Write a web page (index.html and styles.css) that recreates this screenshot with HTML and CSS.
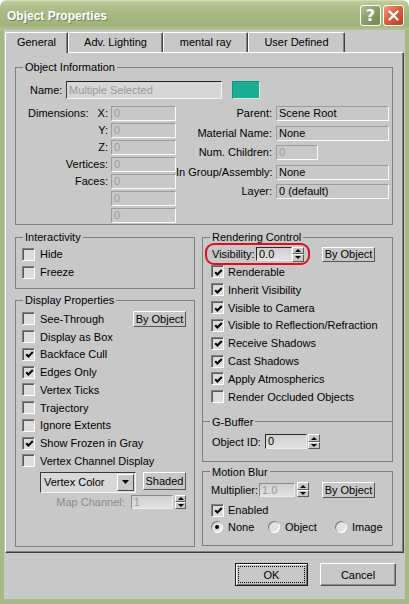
FILE: index.html
```html
<!DOCTYPE html>
<html>
<head>
<meta charset="utf-8">
<title>Object Properties</title>
<link rel="stylesheet" href="styles.css">
</head>
<body>
<div class="window">
  <div class="titlebar">
    <span class="title">Object Properties</span>
    <div class="tb-btns">
      <span class="tb-btn help">?</span>
      <span class="tb-btn close"><svg width="13" height="13" viewBox="0 0 13 13"><path d="M2.5 2.5 L10.5 10.5 M10.5 2.5 L2.5 10.5" stroke="#fff" stroke-width="2.4" stroke-linecap="round"/></svg></span>
    </div>
  </div>
  <div class="client">
    <div class="tabs">
      <div class="tab t1 active">General</div>
      <div class="tab t2">Adv. Lighting</div>
      <div class="tab t3">mental ray</div>
      <div class="tab t4">User Defined</div>
    </div>
    <div class="panel">
      <fieldset class="grp objinfo">
        <legend>Object Information</legend>
        <div class="name-row">
          <span class="name-lbl">Name:</span>
          <span class="fld edit name-fld dis">Multiple Selected</span>
          <span class="swatch"></span>
        </div>
        <div class="details">
          <div class="dims">
            <span class="lbl dim-first"><span>Dimensions:</span><span>X:</span></span><span class="fld dis">0</span>
            <span class="lbl">Y:</span><span class="fld dis">0</span>
            <span class="lbl">Z:</span><span class="fld dis">0</span>
            <span class="lbl">Vertices:</span><span class="fld dis">0</span>
            <span class="lbl">Faces:</span><span class="fld dis">0</span>
            <span class="lbl"></span><span class="fld dis">0</span>
            <span class="lbl"></span><span class="fld dis">0</span>
          </div>
          <div class="info">
            <span class="lbl">Parent:</span><span class="fld">Scene Root</span>
            <span class="lbl">Material Name:</span><span class="fld">None</span>
            <span class="lbl">Num. Children:</span><span class="fld dis short">0</span>
            <span class="lbl">In Group/Assembly:</span><span class="fld">None</span>
            <span class="lbl">Layer:</span><span class="fld">0 (default)</span>
          </div>
        </div>
      </fieldset>

      <div class="cols">
        <div class="col left">
          <fieldset class="grp interact">
            <legend>Interactivity</legend>
            <div class="chk-row"><span class="cb"></span><span>Hide</span></div>
            <div class="chk-row"><span class="cb"></span><span>Freeze</span></div>
          </fieldset>
          <fieldset class="grp display">
            <legend>Display Properties</legend>
            <div class="chk-row"><span class="cb"></span><span>See-Through</span><span class="btn small byobj">By Object</span></div>
            <div class="chk-row"><span class="cb"></span><span>Display as Box</span></div>
            <div class="chk-row"><span class="cb"><svg class="tick" width="9" height="9" viewBox="0 0 9 9"><path d="M1.2 4.2 L3.4 6.4 L7.8 2" stroke="#000" stroke-width="2.1" fill="none"/></svg></span><span>Backface Cull</span></div>
            <div class="chk-row"><span class="cb"><svg class="tick" width="9" height="9" viewBox="0 0 9 9"><path d="M1.2 4.2 L3.4 6.4 L7.8 2" stroke="#000" stroke-width="2.1" fill="none"/></svg></span><span>Edges Only</span></div>
            <div class="chk-row"><span class="cb"></span><span>Vertex Ticks</span></div>
            <div class="chk-row"><span class="cb"></span><span>Trajectory</span></div>
            <div class="chk-row"><span class="cb"></span><span>Ignore Extents</span></div>
            <div class="chk-row"><span class="cb"><svg class="tick" width="9" height="9" viewBox="0 0 9 9"><path d="M1.2 4.2 L3.4 6.4 L7.8 2" stroke="#000" stroke-width="2.1" fill="none"/></svg></span><span>Show Frozen in Gray</span></div>
            <div class="chk-row"><span class="cb"></span><span>Vertex Channel Display</span></div>
            <div class="dd-row">
              <span class="dd"><span class="dd-text">Vertex Color</span><span class="dd-arrow"><svg width="7" height="4" viewBox="0 0 7 4"><path d="M0 0 H7 L3.5 4 Z" fill="#000"/></svg></span></span>
              <span class="btn small shaded">Shaded</span>
            </div>
            <div class="map-row">
              <span class="map-lbl">Map Channel:</span>
              <span class="fld spinfld dis map-fld">1</span>
              <span class="spin"><span class="up"></span><span class="dn"></span></span>
            </div>
          </fieldset>
        </div>

        <div class="col right">
          <fieldset class="grp render">
            <legend>Rendering Control</legend>
            <div class="vis-row">
              <span class="oval">
                <span class="vis-lbl">Visibility:</span>
                <span class="fld spinfld vis-fld">0.0</span>
                <span class="spin"><span class="up"></span><span class="dn"></span></span>
              </span>
              <span class="btn small byobj2">By Object</span>
            </div>
            <div class="rc-list">
              <div class="chk-row"><span class="cb"><svg class="tick" width="9" height="9" viewBox="0 0 9 9"><path d="M1.2 4.2 L3.4 6.4 L7.8 2" stroke="#000" stroke-width="2.1" fill="none"/></svg></span><span>Renderable</span></div>
              <div class="chk-row"><span class="cb"><svg class="tick" width="9" height="9" viewBox="0 0 9 9"><path d="M1.2 4.2 L3.4 6.4 L7.8 2" stroke="#000" stroke-width="2.1" fill="none"/></svg></span><span>Inherit Visibility</span></div>
              <div class="chk-row"><span class="cb"><svg class="tick" width="9" height="9" viewBox="0 0 9 9"><path d="M1.2 4.2 L3.4 6.4 L7.8 2" stroke="#000" stroke-width="2.1" fill="none"/></svg></span><span>Visible to Camera</span></div>
              <div class="chk-row"><span class="cb"><svg class="tick" width="9" height="9" viewBox="0 0 9 9"><path d="M1.2 4.2 L3.4 6.4 L7.8 2" stroke="#000" stroke-width="2.1" fill="none"/></svg></span><span>Visible to Reflection/Refraction</span></div>
              <div class="chk-row"><span class="cb"><svg class="tick" width="9" height="9" viewBox="0 0 9 9"><path d="M1.2 4.2 L3.4 6.4 L7.8 2" stroke="#000" stroke-width="2.1" fill="none"/></svg></span><span>Receive Shadows</span></div>
              <div class="chk-row"><span class="cb"><svg class="tick" width="9" height="9" viewBox="0 0 9 9"><path d="M1.2 4.2 L3.4 6.4 L7.8 2" stroke="#000" stroke-width="2.1" fill="none"/></svg></span><span>Cast Shadows</span></div>
              <div class="chk-row"><span class="cb"><svg class="tick" width="9" height="9" viewBox="0 0 9 9"><path d="M1.2 4.2 L3.4 6.4 L7.8 2" stroke="#000" stroke-width="2.1" fill="none"/></svg></span><span>Apply Atmospherics</span></div>
              <div class="chk-row"><span class="cb"></span><span>Render Occluded Objects</span></div>
            </div>
            <fieldset class="grp gbuf">
              <legend>G-Buffer</legend>
              <div class="oid-row">
                <span class="oid-lbl">Object ID:</span>
                <span class="fld spinfld oid-fld">0</span>
                <span class="spin"><span class="up"></span><span class="dn"></span></span>
              </div>
            </fieldset>
          </fieldset>
          <fieldset class="grp mblur">
            <legend>Motion Blur</legend>
            <div class="mult-row">
              <span class="mult-lbl">Multiplier:</span>
              <span class="fld spinfld dis mult-fld">1.0</span>
              <span class="spin"><span class="up"></span><span class="dn"></span></span>
              <span class="btn small byobj3">By Object</span>
            </div>
            <div class="chk-row en-row"><span class="cb"><svg class="tick" width="9" height="9" viewBox="0 0 9 9"><path d="M1.2 4.2 L3.4 6.4 L7.8 2" stroke="#000" stroke-width="2.1" fill="none"/></svg></span><span>Enabled</span></div>
            <div class="radio-row">
              <span class="ri r-none"><span class="rb on"></span>None</span>
              <span class="ri r-obj"><span class="rb"></span>Object</span>
              <span class="ri r-img"><span class="rb"></span>Image</span>
            </div>
          </fieldset>
        </div>
      </div>
    </div>
    <div class="footer">
      <span class="btn ok"><span class="focus">OK</span></span>
      <span class="btn cancel">Cancel</span>
    </div>
  </div>
</div>
</body>
</html>
```

FILE: styles.css
```css
* { box-sizing: border-box; }
html, body { margin: 0; padding: 0; }
body {
  width: 409px;
  height: 604px;
  overflow: hidden;
  background: #ffffff;
  font-family: "Liberation Sans", Arial, sans-serif;
  font-size: 11px;
  color: #000;
}

.window {
  width: 409px;
  height: 604px;
  display: flex;
  flex-direction: column;
}

/* ---------- title bar ---------- */
.titlebar {
  height: 30px;
  flex: none;
  display: flex;
  align-items: flex-start;
  justify-content: space-between;
  padding: 0 5px 0 7px;
  border-radius: 7px 7px 0 0;
  background: linear-gradient(to bottom, #d6dfbd 0, #b9c898 2px, #abbc87 10px, #a5b781 55%, #a2b47d 85%, #b5c494 100%);
}
.title {
  margin-top: 9px;
  color: #fff;
  font-weight: bold;
  font-size: 12px;
  line-height: 14px;
  text-shadow: 1px 1px 0 #76875a;
}
.tb-btns {
  display: flex;
  gap: 2px;
  margin-top: 5px;
}
.tb-btn {
  width: 21px;
  height: 21px;
  border: 1px solid #fff;
  border-radius: 3px;
  display: flex;
  align-items: center;
  justify-content: center;
}
.help {
  background: linear-gradient(135deg, #b1c291 0, #8aa06a 45%, #6f8652 100%);
  color: #fff;
  font-weight: bold;
  font-size: 16px;
  font-family: "DejaVu Sans", "Liberation Sans", sans-serif;
}
.close {
  background: linear-gradient(135deg, #f0a287 0, #d9603f 45%, #bb3d1d 100%);
}

/* ---------- client ---------- */
.client {
  flex: 1;
  display: flex;
  flex-direction: column;
  background: #c8c8c8;
  border-style: solid;
  border-color: #a5b886;
  border-width: 0 4px 5px 4px;
}

.tabs {
  display: flex;
  height: 20px;
  margin: 2px 0 0 1px;
  position: relative;
  z-index: 1;
}
.tab {
  height: 20px;
  border-top: 1px solid #fff;
  border-left: 1px solid #fff;
  border-right: 1px solid #404040;
  box-shadow: inset -1px 0 0 #808080;
  border-radius: 2px 2px 0 0;
  text-align: center;
  line-height: 19px;
  background: #c8c8c8;
}
.tab.active { height: 21px; }
.t1 { width: 63px; }
.t2 { width: 95px; }
.t3 { width: 85px; }
.t4 { width: 97px; }

.panel {
  margin-left: 1px;
  width: 399px;
  height: 501px;
  flex: none;
  border: 1px solid;
  border-color: #fff #404040 #404040 #fff;
  box-shadow: inset -1px -1px 0 #808080;
}

/* ---------- group boxes ---------- */
.grp {
  margin: 0;
  padding: 0;
  min-width: 0;
  border: 1px solid #7e7e7e;
}
.grp > legend {
  padding: 0 2px;
  line-height: 14px;
  font-size: 11px;
}

.objinfo {
  margin: 7px 10px 0 9px;
  padding: 0 0 1px 12px;
}
.objinfo > legend { margin-left: -5px; }

.name-row {
  display: flex;
  align-items: center;
  height: 18px;
  margin: 7px 0 0 2px;
}
.name-lbl { width: 36px; }
.fld.name-fld { width: 156px; height: 18px; line-height: 16px; }
.swatch {
  width: 28px;
  height: 18px;
  margin-left: 10px;
  background: #1dad95;
  border: 1px solid;
  border-color: #178f7b #e4e4e4 #e4e4e4 #178f7b;
}

.details {
  display: flex;
  margin-top: 7px;
}
.dims {
  display: grid;
  grid-template-columns: 80px 65px;
  column-gap: 3px;
  grid-auto-rows: 15px;
  row-gap: 2px;
  width: 148px;
}
.info {
  display: grid;
  grid-template-columns: 96px 113px;
  column-gap: 4px;
  grid-auto-rows: 15px;
  row-gap: 4.5px;
  align-content: start;
}
.lbl {
  text-align: right;
  line-height: 15px;
  white-space: nowrap;
}
.dim-first {
  display: flex;
  justify-content: space-between;
}

/* ---------- fields ---------- */
.fld {
  display: block;
  height: 15px;
  border: 1px solid;
  border-color: #9c9c9c #fbfbfb #fbfbfb #9c9c9c;
  padding-left: 2px;
  line-height: 13px;
  white-space: nowrap;
  overflow: hidden;
  background: #c8c8c8;
}
.fld.dis { color: #9a9a9a; }
.fld.edit {
  border-color: #1e1e1e #f2f2f2 #f2f2f2 #3a3a3a;
  background: #d6d6d6;
}
.fld.short { width: 42px; }

.fld.spinfld {
  height: 14px;
  line-height: 12px;
  border-color: #2a2a2a #ececec #ececec #2a2a2a;
  background: linear-gradient(to bottom, #cfcfcf, #e2e2e2);
}
.fld.spinfld.dis { border-color: #8a8a8a #ececec #ececec #8a8a8a; }

.spin {
  display: flex;
  flex-direction: column;
  width: 12px;
  height: 15px;
  flex: none;
}
.spin > span {
  flex: 1;
  display: flex;
  align-items: center;
  justify-content: center;
  border: 1px solid;
  border-color: #fff #5a5a5a #5a5a5a #fff;
  background: #c8c8c8;
}
.spin > .up::after {
  content: "";
  border-left: 3px solid transparent;
  border-right: 3px solid transparent;
  border-bottom: 3px solid #000;
}
.spin > .dn::after {
  content: "";
  border-left: 3px solid transparent;
  border-right: 3px solid transparent;
  border-top: 3px solid #000;
}

/* ---------- buttons ---------- */
.btn {
  display: flex;
  align-items: center;
  justify-content: center;
  flex: none;
  border: 1px solid;
  border-color: #fff #555 #555 #fff;
  background: #c8c8c8;
  white-space: nowrap;
}
.btn.small { width: 53px; height: 16px; font-size: 11px; }

/* ---------- checkboxes / radios ---------- */
.chk-row {
  display: flex;
  align-items: center;
  height: 18px;
  gap: 5px;
  white-space: nowrap;
}
.cb {
  width: 13px;
  height: 13px;
  flex: none;
  border: 1px solid;
  border-color: #808080 #fff #fff #808080;
  box-shadow: inset 1px 1px 0 #5a5a5a;
  background: #dcdcdc;
  display: flex;
  align-items: center;
  justify-content: center;
  padding: 1px 0 0 1px;
}
.tick { display: block; }

.rb {
  width: 12px;
  height: 12px;
  flex: none;
  border-radius: 50%;
  background: #e2e2e2;
  box-shadow: inset 1px 1px 0 #7a7a7a, inset -1px -1px 0 #ffffff;
  display: flex;
  align-items: center;
  justify-content: center;
}
.rb.on::after {
  content: "";
  width: 4px;
  height: 4px;
  border-radius: 50%;
  background: #000;
}

/* ---------- columns ---------- */
.cols {
  display: flex;
  gap: 7px;
  margin: 5px 10px 0 9px;
  align-items: flex-start;
}
.col { display: flex; flex-direction: column; }
.col.left { width: 180px; }
.col.right { width: 191px; }

.interact { padding: 1px 0 7px 6px; }
.interact > legend { margin-left: 1px; }

.display {
  margin-top: 4px;
  padding: 3px 8px 37px 6px;
}
.display > legend { margin-left: 1px; }
.display .chk-row { height: 17.75px; }
.byobj { margin-left: auto; }

.dd-row {
  display: flex;
  align-items: flex-start;
  margin: 2px 0 0 18px;
}
.dd {
  display: flex;
  width: 98px;
  height: 21px;
  border: 1px solid;
  border-color: #3a3a3a #f4f4f4 #f4f4f4 #3a3a3a;
  background: #d8d8d8;
}
.dd-text { padding-left: 3px; line-height: 19px; }
.dd-arrow {
  margin: 1px 1px 1px auto;
  width: 17px;
  border: 1px solid;
  border-color: #fff #4a4a4a #4a4a4a #fff;
  background: #c8c8c8;
  display: flex;
  align-items: center;
  justify-content: center;
}
.dd-arrow svg { display: block; }
.btn.shaded { margin-left: 7px; width: 43px; height: 18px; }

.map-row {
  display: flex;
  align-items: center;
  height: 14px;
  margin-top: 2px;
}
.map-lbl {
  width: 105px;
  margin-right: 6px;
  text-align: right;
  color: #8c8c8c;
}
.map-fld { width: 43px; }
.map-row .spin { margin-left: 2px; width: 11px; height: 14px; }

/* rendering control */
.render > legend { margin-left: 7px; }
.vis-row {
  display: flex;
  align-items: center;
  height: 22px;
  margin-top: -1px;
}
.oval {
  display: flex;
  align-items: center;
  width: 105px;
  height: 22px;
  margin-left: 2px;
  padding-left: 5px;
  border: 2px solid #d8101f;
  border-radius: 9px;
}
.vis-lbl { width: 44px; }
.vis-fld { width: 36px; }
.btn.byobj2 { margin-left: 12px; height: 15px; }

.rc-list {
  margin-top: -2px;
  padding-left: 8px;
}
.rc-list .chk-row { height: 17.85px; gap: 4px; }

.gbuf {
  margin: 9px -1px -1px -1px;
  padding: 5px 0 11px 9px;
}
.gbuf > legend { margin-left: -2px; }
.oid-row {
  display: flex;
  align-items: center;
  height: 16px;
}
.oid-lbl { width: 53px; }
.fld.oid-fld { width: 42px; height: 15px; }
.oid-row .spin { margin-left: 1px; }

/* motion blur */
.mblur {
  margin-top: 3px;
  padding: 2px 0 9px 8px;
}
.mblur > legend { margin-left: -1px; }
.mult-row {
  display: flex;
  align-items: center;
  height: 18px;
}
.mult-lbl { width: 48px; }
.mult-fld { width: 36px; }
.mult-row .spin { margin-left: 2px; }
.byobj3 { margin-left: 13px; }
.chk-row.en-row { margin-top: 3px; height: 17px; gap: 4px; }
.radio-row {
  display: flex;
  align-items: center;
  height: 17px;
}
.ri {
  display: flex;
  align-items: center;
  gap: 5px;
}
.r-none { width: 57px; }
.r-obj { width: 67px; }

/* footer */
.footer {
  display: flex;
  justify-content: flex-end;
  gap: 12px;
  margin-top: 10px;
  padding-right: 9px;
}
.btn.ok {
  width: 73px;
  height: 23px;
  border-color: #1a1a1a;
  box-shadow: inset 1px 1px 0 #fff, inset -1px -1px 0 #7a7a7a;
}
.focus {
  width: 67px;
  height: 17px;
  border: 1px dotted #000;
  display: flex;
  align-items: center;
  justify-content: center;
}
.btn.cancel {
  width: 76px;
  height: 23px;
  box-shadow: inset -1px -1px 0 #8a8a8a;
}
```
